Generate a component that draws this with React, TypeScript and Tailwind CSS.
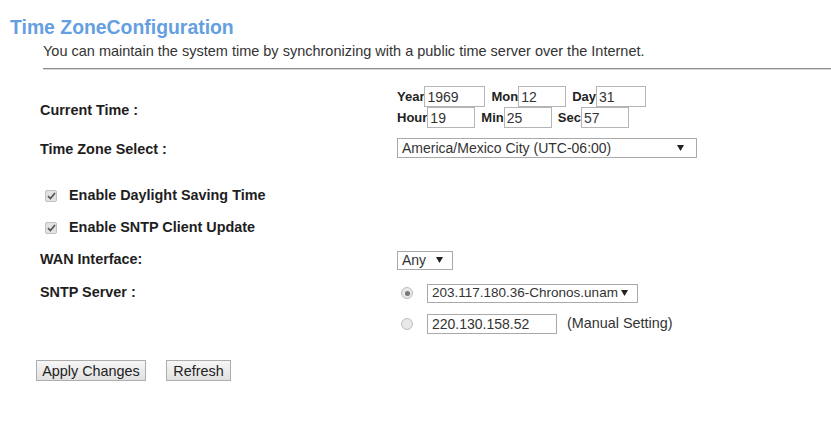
const font = { fontFamily: '"Liberation Sans", Arial, sans-serif' };

function Arrow() {
  return (
    <svg width="7" height="6" viewBox="0 0 7 6" className="shrink-0">
      <path d="M0 0 L7 0 L3.5 6 Z" fill="#222" />
    </svg>
  );
}

function FakeSelect({ value, className }: { value: string; className: string }) {
  return (
    <div
      className={`flex items-center justify-between border border-[#a9a9a9] bg-white pl-[4px] pr-[9px] text-[#333] ${className}`}
    >
      <span className="whitespace-nowrap leading-none">{value}</span>
      <Arrow />
    </div>
  );
}

function Field({ label, value, w }: { label: string; value: string; w: string }) {
  return (
    <div className="flex items-center">
      <span className="text-[13px] font-bold text-[#222] leading-none">{label}</span>
      <div
        className={`h-[21px] ${w} border border-[#b5b5b5] bg-white pl-[2px] flex items-center text-[14px] text-[#333] leading-none`}
      >
        {value}
      </div>
    </div>
  );
}

function Check({ label }: { label: string }) {
  return (
    <div className="flex items-center h-[20px] pl-[45px]">
      <div className="w-[12px] h-[12px] rounded-[2px] border border-[#c0c0c0] bg-[#e2e2e2] flex items-center justify-center">
        <svg width="9" height="8" viewBox="0 0 9 8">
          <path d="M1 4.2 L3.4 6.5 L8 1" stroke="#555" strokeWidth="1.7" fill="none" />
        </svg>
      </div>
      <span className="ml-[12px] text-[14.4px] font-bold text-[#1e1e1e]">{label}</span>
    </div>
  );
}

function Radio({ on }: { on?: boolean }) {
  return (
    <div className="w-[12px] h-[12px] rounded-full border border-[#bdbdbd] bg-[#e8e8e8] flex items-center justify-center">
      {on && <div className="w-[5px] h-[5px] rounded-full bg-[#777]" />}
    </div>
  );
}

function Label({ children, className = "" }: { children: React.ReactNode; className?: string }) {
  return (
    <div className={`w-[397px] pl-[40px] text-[14.4px] font-bold text-[#1e1e1e] shrink-0 ${className}`}>
      {children}
    </div>
  );
}

export default function App() {
  return (
    <div className="w-[831px] h-[434px] bg-white overflow-hidden" style={font}>
      <div className="pt-[16px] pl-[10px] text-[19.4px] leading-[22px] font-bold text-[#64a0e1]">
        Time ZoneConfiguration
      </div>
      <div className="mt-[5px] ml-[43px] text-[14.5px] leading-[16px] text-[#333]">
        You can maintain the system time by synchronizing with a public time server over the Internet.
      </div>
      <div className="mt-[9px] ml-[43px] border-t border-[#8f8f8f] border-b border-b-[#d8d8d8]" />

      <div className="mt-[16px] flex items-center">
        <Label className="translate-y-[4px]">Current Time :</Label>
        <div className="flex flex-col">
          <div className="flex items-center gap-[6px]">
            <Field label="Year" value="1969" w="w-[61px]" />
            <Field label="Mon" value="12" w="w-[48px]" />
            <Field label="Day" value="31" w="w-[50px]" />
          </div>
          <div className="flex items-center gap-[6px]">
            <Field label="Hour" value="19" w="w-[48px]" />
            <Field label="Min" value="25" w="w-[48px]" />
            <Field label="Sec" value="57" w="w-[48px]" />
          </div>
        </div>
      </div>

      <div className="mt-[9px] flex items-center">
        <Label className="translate-y-[2px]">Time Zone Select :</Label>
        <FakeSelect value="America/Mexico City (UTC-06:00)" className="w-[300px] h-[20px] pr-[12px] text-[14px]" />
      </div>

      <div className="mt-[27px]">
        <Check label="Enable Daylight Saving Time" />
      </div>
      <div className="mt-[12px]">
        <Check label="Enable SNTP Client Update" />
      </div>

      <div className="mt-[12px] flex items-center">
        <Label className="-translate-y-[1px]">WAN Interface:</Label>
        <FakeSelect value="Any" className="w-[56px] h-[19px] text-[14px]" />
      </div>

      <div className="mt-[11px] flex items-center">
        <Label>SNTP Server :</Label>
        <div className="flex items-center pl-[4px]">
          <Radio on />
          <FakeSelect value="203.117.180.36-Chronos.unam" className="ml-[14px] w-[211px] h-[19px] pr-[6px] text-[13.5px]" />
        </div>
      </div>

      <div className="mt-[9px] flex items-center">
        <div className="w-[397px] shrink-0" />
        <div className="flex items-center pl-[4px]">
          <Radio />
          <div className="ml-[14px] w-[130px] h-[20px] border border-[#a9a9a9] bg-white pl-[4px] flex items-center text-[14px] text-[#333] leading-none">
            220.130.158.52
          </div>
          <span className="ml-[10px] text-[14.4px] text-[#333]">(Manual Setting)</span>
        </div>
      </div>

      <div className="mt-[26px] pl-[36px] flex items-center gap-[20px]">
        <button className="h-[21px] w-[110px] border border-[#adadad] bg-gradient-to-b from-[#f6f6f6] to-[#e1e1e1] text-[14.4px] text-[#222] leading-none">
          Apply Changes
        </button>
        <button className="h-[21px] w-[65px] border border-[#adadad] bg-gradient-to-b from-[#f6f6f6] to-[#e1e1e1] text-[14.4px] text-[#222] leading-none">
          Refresh
        </button>
      </div>
    </div>
  );
}
